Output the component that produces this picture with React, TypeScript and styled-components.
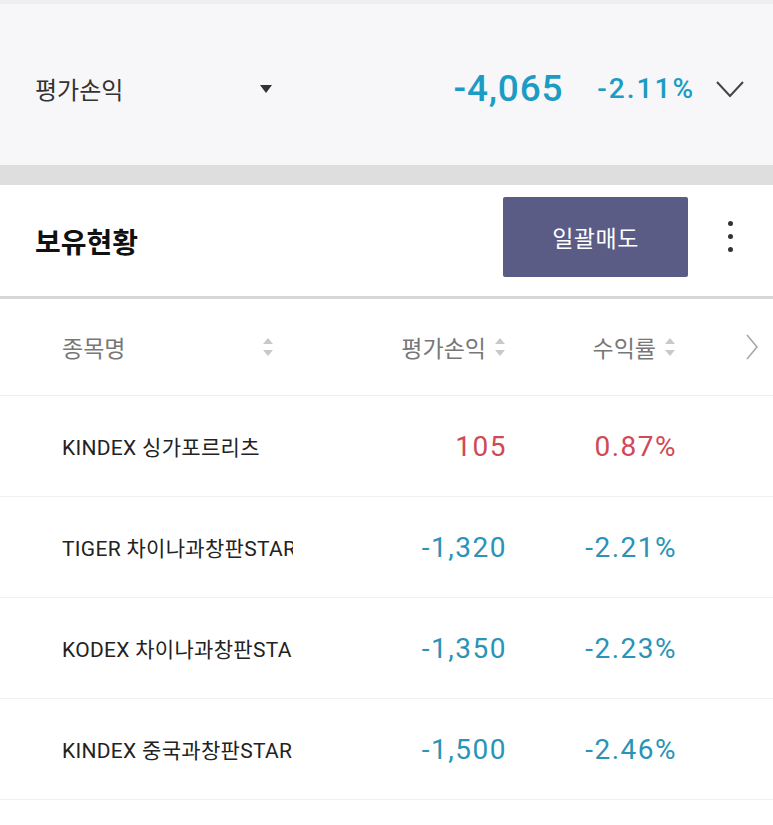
import React from 'react';
import styled, { createGlobalStyle } from 'styled-components';

const GlobalStyle = createGlobalStyle`
  html, body {
    margin: 0;
    padding: 0;
    background: #ffffff;
    font-family: Roboto, "Noto Sans CJK KR", sans-serif;
  }
`;

type Holding = {
  name: string;
  profit: string;
  rate: string;
  up: boolean;
};

const holdings: Holding[] = [
  { name: 'KINDEX 싱가포르리츠', profit: '105', rate: '0.87%', up: true },
  { name: 'TIGER 차이나과창판STAR50', profit: '-1,320', rate: '-2.21%', up: false },
  { name: 'KODEX 차이나과창판STAR50', profit: '-1,350', rate: '-2.23%', up: false },
  { name: 'KINDEX 중국과창판STAR50', profit: '-1,500', rate: '-2.46%', up: false },
];

const SortIcon = () => (
  <svg width="14" height="24" viewBox="0 0 14 24">
    <path d="M7 3 L12 9 L2 9 Z" fill="#c9c9c9" />
    <path d="M7 21 L12 15 L2 15 Z" fill="#c9c9c9" />
  </svg>
);

export default function App() {
  return (
    <Page>
      <GlobalStyle />
      <Summary>
        <SummaryLabel>평가손익</SummaryLabel>
        <Caret>
          <svg width="14" height="10" viewBox="0 0 14 10">
            <path d="M1 1 L13 1 L7 9 Z" fill="#333" />
          </svg>
        </Caret>
        <SummaryAmount>-4,065</SummaryAmount>
        <SummaryRate>-2.11%</SummaryRate>
        <Expand>
          <svg width="30" height="20" viewBox="0 0 30 20">
            <path d="M2 3 L15 17 L28 3" fill="none" stroke="#444" strokeWidth="2" />
          </svg>
        </Expand>
      </Summary>
      <Band />
      <SectionHeader>
        <SectionTitle>보유현황</SectionTitle>
        <SellAllButton>일괄매도</SellAllButton>
        <Kebab>
          <Dot />
          <Dot />
          <Dot />
        </Kebab>
      </SectionHeader>
      <Table>
        <HeaderRow>
          <NameHead>
            종목명
            <SortIcon />
          </NameHead>
          <ValueHead>
            평가손익
            <SortIcon />
          </ValueHead>
          <ValueHead>
            수익률
            <SortIcon />
          </ValueHead>
          <MoreCol>
            <svg width="14" height="28" viewBox="0 0 14 28">
              <path d="M2 2 L12 14 L2 26" fill="none" stroke="#a8a8a8" strokeWidth="1.6" />
            </svg>
          </MoreCol>
        </HeaderRow>
        {holdings.map((h) => (
          <Row key={h.name}>
            <Name>{h.name}</Name>
            <Value $up={h.up}>{h.profit}</Value>
            <Value $up={h.up}>{h.rate}</Value>
            <span />
          </Row>
        ))}
      </Table>
    </Page>
  );
}

const Page = styled.div`
  width: 773px;
  min-height: 825px;
  background: #fff;
`;

const Summary = styled.div`
  height: 165px;
  border-top: 4px solid #efeff1;
  background: #f7f7f9;
  display: flex;
  align-items: center;
  padding: 8px 28px 0 35px;
  box-sizing: border-box;
`;

const SummaryLabel = styled.span`
  font-size: 24px;
  color: #333;
  width: 224px;
`;

const Caret = styled.span`
  display: flex;
  align-items: center;
  flex: 1;
`;

const SummaryAmount = styled.span`
  font-size: 37px;
  font-weight: 500;
  color: #1c9cc4;
  letter-spacing: 0.8px;
  margin-right: 34px;
`;

const SummaryRate = styled.span`
  font-size: 28px;
  font-weight: 500;
  color: #1c9cc4;
  letter-spacing: 2px;
  margin-right: 20px;
`;

const Expand = styled.span`
  display: flex;
  align-items: center;
`;

const Band = styled.div`
  height: 20px;
  background: #dedede;
`;

const SectionHeader = styled.div`
  height: 111px;
  display: flex;
  align-items: center;
  padding: 0 0 0 35px;
  border-bottom: 3px solid #d6d6d6;
`;

const SectionTitle = styled.h2`
  margin: 0;
  flex: 1;
  font-size: 28px;
  font-weight: 700;
  color: #111;
`;

const SellAllButton = styled.button`
  width: 185px;
  height: 80px;
  border: none;
  border-radius: 2px;
  background: #5b5c85;
  color: #fff;
  font-family: "Noto Sans CJK KR", sans-serif;
  font-size: 23px;
  letter-spacing: 0.5px;
  margin-bottom: 8px;
`;

const Kebab = styled.div`
  width: 85px;
  display: flex;
  flex-direction: column;
  align-items: center;
  gap: 8px;
  margin-bottom: 8px;
`;

const Dot = styled.span`
  width: 5px;
  height: 5px;
  border-radius: 50%;
  background: #333;
`;

const Table = styled.div``;

const gridCols = `
  display: grid;
  grid-template-columns: 231px 214px 170px 1fr;
  align-items: center;
  padding-left: 62px;
`;

const HeaderRow = styled.div`
  ${gridCols}
  height: 96px;
  border-bottom: 1px solid #ececec;
`;

const NameHead = styled.div`
  display: flex;
  align-items: center;
  justify-content: space-between;
  padding-right: 18px;
  font-size: 23px;
  color: #777;
`;

const ValueHead = styled.div`
  display: flex;
  align-items: center;
  justify-content: flex-end;
  gap: 7px;
  font-size: 23px;
  color: #777;
`;

const MoreCol = styled.div`
  display: flex;
  justify-content: flex-end;
  padding-right: 14px;
`;

const Row = styled.div`
  ${gridCols}
  height: 100px;
  border-bottom: 1px solid #f1f1f1;
`;

const Name = styled.div`
  font-size: 21px;
  letter-spacing: 0.3px;
  color: #222;
  white-space: nowrap;
  overflow: hidden;
`;

const Value = styled.div<{ $up: boolean }>`
  text-align: right;
  font-size: 28px;
  letter-spacing: 1.5px;
  color: ${(p) => (p.$up ? '#cf4a55' : '#2a93b6')};
`;
